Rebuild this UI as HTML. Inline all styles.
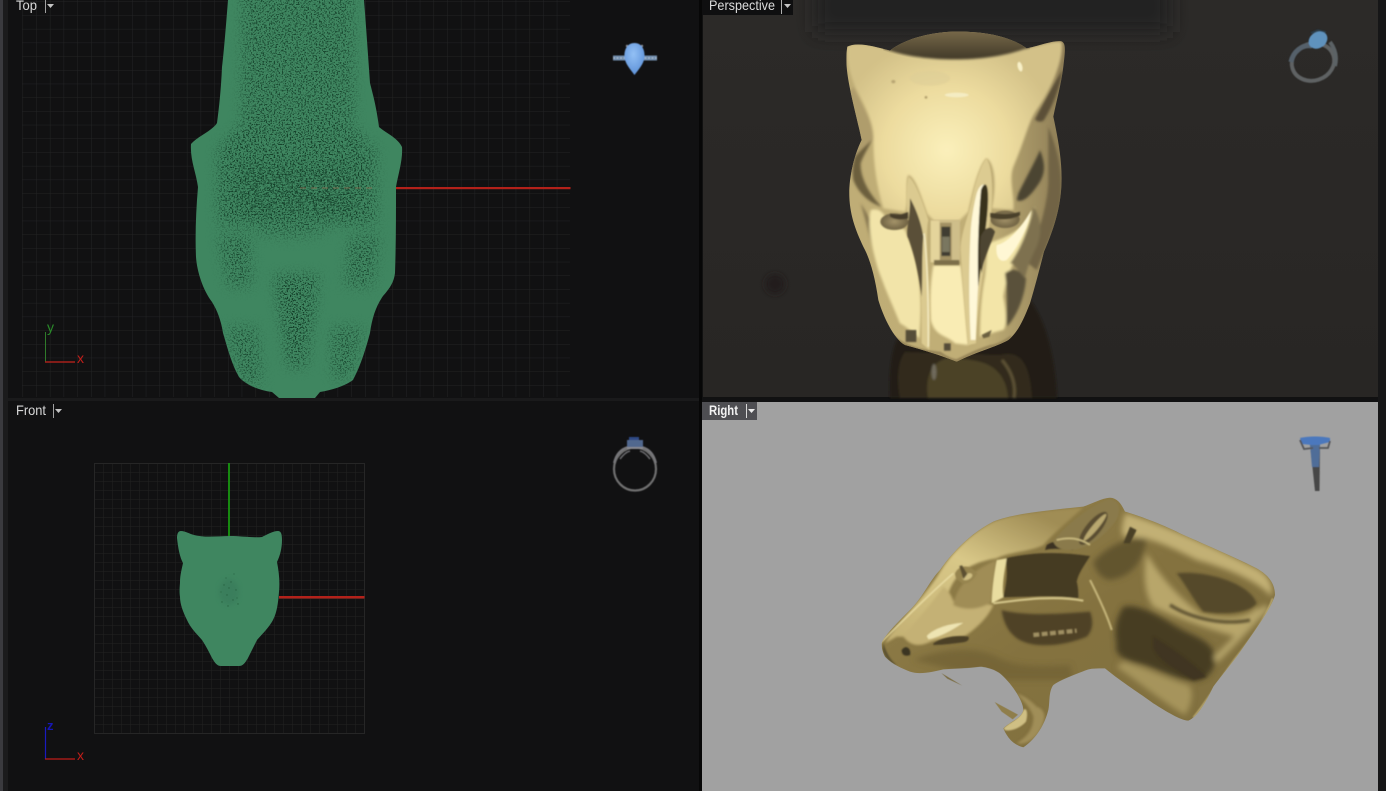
<!DOCTYPE html>
<html><head><meta charset="utf-8"><style>
html,body{margin:0;padding:0;background:#111112;overflow:hidden}
svg{display:block}
text{font-family:"Liberation Sans",sans-serif}
</style></head><body>
<svg width="1386" height="791" viewBox="0 0 1386 791" xmlns="http://www.w3.org/2000/svg">
<defs>
<pattern id="g1" x="22.5" y="1.5" width="13.7" height="13.7" patternUnits="userSpaceOnUse"><path d="M0 0H13.7M0 0V13.7" stroke="#232424" stroke-width="1" fill="none"/></pattern>
<pattern id="g2" x="94.5" y="463.5" width="9" height="9" patternUnits="userSpaceOnUse"><path d="M0 0H9M0 0V9" stroke="#222222" stroke-width="1" fill="none"/></pattern>
<filter id="speck" x="0" y="0" width="100%" height="100%" color-interpolation-filters="sRGB"><feTurbulence type="fractalNoise" baseFrequency=".62 .7" numOctaves="2" seed="4"/><feColorMatrix type="matrix" values="0 0 0 0 .07 0 0 0 0 .23 0 0 0 0 .15 9 0 0 0 -4.700"/></filter>
<filter id="streak" x="0" y="0" width="100%" height="100%" color-interpolation-filters="sRGB"><feTurbulence type="fractalNoise" baseFrequency=".22 .85" numOctaves="2" seed="9"/><feColorMatrix type="matrix" values="0 0 0 0 .07 0 0 0 0 .23 0 0 0 0 .15 9 0 0 0 -4.800"/></filter>
<clipPath id="topc"><path d="M228 0C226 25 224 50 222 67C221 90 219 108 217 123C212 131 198 136 191 144C190 160 196 172 198 187C196 210 195 235 196 257C197 272 203 290 212 302C217 310 221 320 223 333C228 350 232 365 239 377C246 385 258 390 272 392L279 398H315L320 392C332 390 345 386 353 380C361 365 366 348 370 333C372 318 376 306 383 296C390 288 394 282 395 273C396 245 396 215 396 187C398 175 403 160 402 147C398 138 386 133 379 127C376 105 373 95 370 83C368 55 366 25 364 0Z"/></clipPath>
<clipPath id="phc"><path d="M22 50C50 35 100 48 150 62C190 30 260 8 340 5C420 3 505 15 560 55C590 50 640 30 665 34C678 40 676 60 670 110C664 160 650 210 640 260C655 330 668 400 664 470C660 540 640 600 612 665C598 720 585 770 570 820C550 870 535 905 505 930C470 950 410 965 350 995C300 975 250 960 195 945C160 925 130 860 115 810C105 740 90 690 75 660C50 610 30 560 28 500C26 450 40 380 65 330C55 280 30 190 22 130C18 100 18 75 22 50Z"/></clipPath>
<clipPath id="rhc"><path d="M65 490C70 470 110 430 150 390C190 350 210 300 240 270C270 225 330 160 400 125C450 105 520 95 670 80C695 72 725 55 750 53C775 55 785 75 795 95C830 105 900 130 960 160C1050 200 1130 235 1190 265C1225 285 1245 310 1245 345C1235 380 1200 430 1130 530C1095 575 1075 600 1060 620C1040 660 1015 710 985 722C960 720 920 695 880 670C840 640 790 610 735 565C710 565 690 565 680 570C640 585 600 600 580 615C565 635 570 670 565 690C555 730 530 775 490 802C465 795 445 780 430 745C450 725 485 715 490 690C490 660 450 605 420 580C400 565 370 560 360 560C320 565 290 565 250 568C220 575 180 585 150 575C125 565 100 555 75 530C68 515 65 505 65 490Z"/></clipPath>
<filter id="b1" x="-20%" y="-20%" width="140%" height="140%"><feGaussianBlur stdDeviation="1"/></filter>
<filter id="b2" x="-20%" y="-20%" width="140%" height="140%"><feGaussianBlur stdDeviation="2.5"/></filter>
<filter id="b3" x="-30%" y="-30%" width="160%" height="160%"><feGaussianBlur stdDeviation="3"/></filter>
<filter id="b6" x="-30%" y="-30%" width="160%" height="160%"><feGaussianBlur stdDeviation="6"/></filter>
<filter id="bg" x="-30%" y="-100%" width="160%" height="300%"><feGaussianBlur stdDeviation="9"/></filter>
<filter id="l1" x="-10%" y="-10%" width="120%" height="120%"><feGaussianBlur stdDeviation="1"/></filter>
<filter id="l2" x="-10%" y="-10%" width="120%" height="120%"><feGaussianBlur stdDeviation="2"/></filter>
<filter id="l4" x="-10%" y="-10%" width="120%" height="120%"><feGaussianBlur stdDeviation="4"/></filter>
<filter id="l8" x="-20%" y="-20%" width="140%" height="140%"><feGaussianBlur stdDeviation="9"/></filter>
<filter id="s" x="-20%" y="-20%" width="140%" height="140%"><feGaussianBlur stdDeviation=".5"/></filter>
<mask id="mm" maskUnits="userSpaceOnUse" x="180" y="0" width="230" height="400">
<g filter="url(#b6)" fill="#fff">
<rect x="242" y="-20" width="112" height="140" opacity=".8"/>
<path d="M244 120H348L376 150V225H218V150Z" opacity=".9"/>
<path d="M218 235H250L252 287H228Z" opacity=".8"/>
<path d="M350 235H380L372 287H345Z" opacity=".8"/>
<ellipse cx="290" cy="230" rx="36" ry="8" opacity=".6"/>
<path d="M274 275H319L306 367H288Z" opacity="1"/>
<path d="M226 327H257L262 383H242Z" opacity=".8"/>
<path d="M332 327H363L350 377H332Z" opacity=".8"/>
</g></mask>
<mask id="mb" maskUnits="userSpaceOnUse" x="180" y="0" width="230" height="400">
<rect x="240" y="165" width="115" height="50" fill="#fff" opacity=".55" filter="url(#b6)"/></mask>
<radialGradient id="face" gradientUnits="userSpaceOnUse" cx="320" cy="360" r="340"><stop offset="0" stop-color="#fbf0bb"/><stop offset=".55" stop-color="#eddc9f"/><stop offset="1" stop-color="#d3c188"/></radialGradient>
<linearGradient id="sil" x1="0" x2="1" y1="0" y2="0"><stop offset="0" stop-color="#bfad76"/><stop offset=".6" stop-color="#c0ae76"/><stop offset="1" stop-color="#847450"/></linearGradient>
<linearGradient id="bump" x1="0" x2="0" y1="0" y2="1"><stop offset="0" stop-color="#7c6d4c"/><stop offset=".6" stop-color="#544a34"/><stop offset="1" stop-color="#3c3526"/></linearGradient>
<radialGradient id="eye"><stop offset="0" stop-color="#a5946a"/><stop offset="1" stop-color="#6f6243"/></radialGradient>
<linearGradient id="rb" x1="0" x2="1" y1="0" y2="1"><stop offset="0" stop-color="#988650"/><stop offset=".5" stop-color="#84723f"/><stop offset="1" stop-color="#807040"/></linearGradient>
<linearGradient id="skull" x1="0" x2=".7" y1="1" y2="0"><stop offset="0" stop-color="#c2af72"/><stop offset=".6" stop-color="#d9c888"/><stop offset="1" stop-color="#a08d55"/></linearGradient>
<radialGradient id="pear" cx=".45" cy=".35" r=".7"><stop offset="0" stop-color="#93c0f5"/><stop offset="1" stop-color="#5a8fd6"/></radialGradient>
<linearGradient id="pbg" x1="0" x2="0" y1="0" y2="1"><stop offset="0" stop-color="#2c2a28"/><stop offset="1" stop-color="#282624"/></linearGradient>
</defs>

<!-- window -->
<rect width="1386" height="791" fill="#111112"/>
<rect x="0" y="0" width="3" height="791" fill="#3a3a3e"/>
<rect x="3" y="0" width="5" height="791" fill="#1b1b1c"/>
<rect x="8" y="398" width="692" height="3" fill="#1a1a1b"/>
<rect x="699" y="0" width="3" height="791" fill="#070707"/>

<!-- TOP -->
<rect x="22" y="0" width="548" height="397" fill="url(#g1)"/>
<rect x="396" y="187" width="174.500" height="2.200" fill="#b3211a"/>
<path fill="#3f8660" d="M228 0C226 25 224 50 222 67C221 90 219 108 217 123C212 131 198 136 191 144C190 160 196 172 198 187C196 210 195 235 196 257C197 272 203 290 212 302C217 310 221 320 223 333C228 350 232 365 239 377C246 385 258 390 272 392L279 398H315L320 392C332 390 345 386 353 380C361 365 366 348 370 333C372 318 376 306 383 296C390 288 394 282 395 273C396 245 396 215 396 187C398 175 403 160 402 147C398 138 386 133 379 127C376 105 373 95 370 83C368 55 366 25 364 0Z"/>
<g clip-path="url(#topc)">
<g mask="url(#mm)"><rect x="180" y="0" width="230" height="400" filter="url(#speck)"/></g>
<g mask="url(#mb)"><rect x="180" y="0" width="230" height="400" filter="url(#streak)"/></g>
</g>
<path d="M300 188H372" stroke="#9a6a50" stroke-width="1" stroke-dasharray="6 5" opacity=".7"/>

<!-- top axis -->
<path d="M45.500 332V362" stroke="#2f7a2a" stroke-width="1"/>
<path d="M45 362H75" stroke="#a8201a" stroke-width="1.500"/>
<text x="47" y="332" font-size="14" fill="#2a8a2a">y</text>
<text x="77" y="363" font-size="14" fill="#c21e1a">x</text>

<!-- top ring -->
<g filter="url(#s)">
<rect x="613" y="55.500" width="44" height="5" fill="#6f8cab"/>
<path d="M613 58H657" stroke="#aebfd2" stroke-width="1.200" stroke-dasharray="2 1.500"/>
<circle cx="627" cy="46" r="1.200" fill="#8a8f96"/><circle cx="642" cy="46" r="1.200" fill="#8a8f96"/>
<path d="M634.500 43C642 43 645 50 644.500 57C644 64 638 70 634.500 75C631 70 625 64 624.500 57C624 50 627 43 634.500 43Z" fill="url(#pear)"/>
</g>

<!-- label Top -->
<text x="16" y="10" font-size="14" fill="#d8d8d8" textLength="21" lengthAdjust="spacingAndGlyphs">Top</text>
<rect x="45" y="0" width="1" height="13" fill="#a0a0a0"/>
<path d="M47 4H54L50.500 8Z" fill="#c4c4c4"/>

<!-- FRONT -->
<rect x="94" y="463" width="271" height="271" fill="url(#g2)"/>
<rect x="94.500" y="463.500" width="270" height="270" fill="none" stroke="#262626"/>
<rect x="228" y="463" width="2" height="75" fill="#178a10"/>
<rect x="279" y="596" width="85.500" height="2.500" fill="#b3211a"/>
<path fill="#3f8660" d="M177 538C177 534 178 531 181 531C185 531 190 534 194 535C205 538 218 536 230 536C242 536 254 538 262 537C266 535 273 531 278 531C281 531 282 534 282 540C282 548 280 556 277 562C279 572 280 582 279 592C278 604 277 612 273 620C268 629 262 634 257 640C254 646 251 652 248 658C245 663 243 666 239 666H221C217 666 215 663 212 658C209 652 206 646 202 640C197 634 191 629 187 620C183 612 180 604 180 597C179 590 180 585 180 582C180 575 182 568 183 563C180 558 178 548 177 538Z"/>
<ellipse cx="229" cy="592" rx="10" ry="13" fill="#37795a" opacity=".6" filter="url(#b2)"/>
<g fill="#25603f" opacity=".85"><circle cx="224" cy="585" r=".7"/><circle cx="231" cy="582" r=".7"/><circle cx="236" cy="590" r=".7"/><circle cx="227" cy="595" r=".7"/><circle cx="233" cy="600" r=".7"/><circle cx="222" cy="602" r=".7"/><circle cx="238" cy="604" r=".7"/><circle cx="228" cy="606" r=".7"/><circle cx="226" cy="578" r=".6"/><circle cx="234" cy="574" r=".6"/><circle cx="229" cy="588" r=".7"/><circle cx="221" cy="592" r=".6"/><circle cx="237" cy="598" r=".6"/></g>

<!-- front axis -->
<path d="M45.500 727V759" stroke="#1a1ac0" stroke-width="1.200"/>
<path d="M45 759H75" stroke="#c01e1a" stroke-width="1.200"/>
<text x="47" y="730" font-size="13" font-weight="bold" fill="#1616b8">z</text>
<text x="77" y="760" font-size="14" fill="#c21e1a">x</text>

<!-- front ring -->
<g filter="url(#s)">
<ellipse cx="635" cy="469" rx="21" ry="21.500" fill="none" stroke="#6f6f70" stroke-width="2.200"/>
<path d="M614 463C616 454 621 449 628 447M656 463C654 454 649 449 642 447" stroke="#77777a" stroke-width="2" fill="none"/>
<path d="M620 459C623 455 626 452 630 451M650 459C647 455 644 452 640 451" stroke="#6a6a6d" stroke-width="1.500" fill="none"/>
<rect x="627" y="440" width="16" height="7" fill="#51688e"/>
<rect x="629" y="437" width="10" height="3" fill="#2f4a85"/>
<rect x="627" y="447" width="16" height="2" fill="#8a8a90"/>
</g>
<text x="16" y="415" font-size="14" fill="#d8d8d8" textLength="30" lengthAdjust="spacingAndGlyphs">Front</text>
<rect x="53" y="404" width="1" height="14" fill="#a0a0a0"/>
<path d="M55 409H62L58.500 413Z" fill="#c4c4c4"/>

<!-- PERSPECTIVE -->
<rect x="702" y="0" width="676" height="398" fill="url(#pbg)"/>
<rect x="815" y="-20" width="355" height="52" fill="#232120" filter="url(#bg)"/>
<ellipse cx="775" cy="284" rx="10" ry="10" fill="#231f1c" filter="url(#b3)"/>
<rect x="702" y="397" width="676" height="1.500" fill="#111"/>
<rect x="1378" y="0" width="8" height="791" fill="#161617"/>
<rect x="702" y="0" width="1" height="398" fill="#111"/>

<!-- reflection below chin -->
<g filter="url(#b1)">
<path d="M890 398C889 380 890 355 897 340L1030 300C1045 320 1055 355 1057 398Z" fill="#241c16"/>
<path d="M900 398C896 380 898 360 905 352L1000 355C1020 350 1030 362 1032 398Z" fill="#312a1b"/>
<path d="M928 398C925 380 930 360 950 358C975 360 1005 360 1008 398Z" fill="#4c4228"/>
<ellipse cx="934" cy="372" rx="2.500" ry="8" fill="#6f6a5c"/>
<path d="M1002 360C1012 372 1016 385 1014 398" stroke="#5c5134" stroke-width="3" fill="none"/>
</g>

<!-- front head -->
<g transform="translate(840 30) scale(.33333)">
<g clip-path="url(#phc)">
<rect x="0" y="0" width="720" height="1020" fill="url(#sil)"/>
<path fill="url(#bump)" d="M130 -5H570V62C500 100 420 100 340 98C270 95 200 85 130 62Z"/>
<g filter="url(#l4)">
<path fill="url(#face)" d="M22 50C50 35 100 48 150 62C250 95 430 100 550 58C590 50 640 30 665 36C672 80 640 170 590 240C565 275 555 330 520 410C505 450 525 500 520 540L455 535C470 470 465 400 440 385C420 400 400 470 385 545L358 572L282 572L262 552C240 490 225 440 205 435C195 450 208 520 195 545L130 535C110 470 100 400 100 330C105 280 70 220 45 170C30 130 18 90 22 50Z"/>
<path d="M40 170C70 230 100 280 100 330C90 345 60 370 45 420L30 440L20 200Z" fill="#a8966a" opacity=".7"/>
<path d="M45 380C62 360 80 345 95 330C85 355 70 375 62 400C60 440 85 490 125 530C90 520 55 490 40 450C36 430 38 400 45 380Z" fill="#6c5f3e"/>
<path d="M62 520C90 560 130 650 155 710C165 760 150 800 130 760C115 720 90 620 62 520Z" fill="#7a6b49" opacity=".8"/>
<path d="M92 540C110 535 125 540 135 560C150 590 185 590 195 600C210 640 235 680 240 780C245 840 240 880 238 925C215 905 200 890 180 880C160 830 140 790 115 720C100 670 80 590 92 540Z" fill="#f2e4a9"/>
<path d="M280 706H362C372 780 378 870 385 945L345 940C320 915 285 920 272 870C268 810 272 750 280 706Z" fill="#f9ecb4"/>
<path d="M445 640C470 630 500 625 545 590C560 580 575 540 585 530C575 580 550 640 530 680C510 720 500 740 490 800C500 850 500 890 490 900C470 905 450 910 420 920C420 850 425 790 435 740C440 700 440 670 445 640Z" fill="#f3e5a8"/>
<path d="M585 268C605 230 635 170 668 120C660 170 640 225 612 270C605 278 590 275 585 268Z" fill="#5b5038"/>
<path d="M625 290C660 380 670 440 660 530C645 590 625 640 590 720L565 700C590 620 620 540 625 460Z" fill="#716445"/>
<path d="M495 730C520 710 540 720 558 745C555 800 530 860 500 890C498 850 505 800 495 730Z" fill="#5a513a"/>
<path d="M580 530C600 560 610 600 590 650C570 690 560 720 555 745C530 715 520 700 510 700C540 660 565 600 580 530Z" fill="#7e7150"/>
<path d="M535 490C560 440 590 385 600 360C615 400 620 430 590 470C570 500 545 520 530 510Z" fill="#4c4532"/>
</g>
<g filter="url(#l2)">
<path d="M205 440C225 450 250 520 265 570C255 610 265 720 270 800C272 860 270 920 268 960L245 940C245 860 245 780 235 720C220 670 205 600 200 520C198 490 200 460 205 440Z" fill="#dbca90"/>
<path d="M210 505C225 530 245 580 250 620C245 680 248 750 245 800C235 730 225 680 205 625C195 610 210 570 210 505Z" fill="#5a4f37"/>
<path d="M252 610C262 680 265 800 265 950" stroke="#f7efc8" stroke-width="4" fill="none"/>
<rect x="272" y="570" width="88" height="125" fill="#cfbe8a"/>
<rect x="272" y="572" width="26" height="125" fill="#e4d49b"/>
<rect x="282" y="690" width="76" height="15" fill="#7c6e48"/>
<rect x="300" y="578" width="35" height="112" fill="#a29163"/>
<rect x="304" y="590" width="27" height="88" fill="#3f3e30"/>
<rect x="306" y="620" width="23" height="46" fill="#7a7760"/>
<path d="M438 385C455 400 460 470 455 535C445 600 435 690 425 760C415 830 410 900 408 940L385 945C375 850 365 720 362 660C362 610 385 560 395 510C405 460 420 410 438 385Z" fill="#dccb91"/>
<path d="M410 490C422 455 440 455 442 490C444 540 430 620 420 700C412 780 410 860 407 930L392 930C386 820 386 700 392 600C396 550 404 515 410 490Z" fill="#fff8d8"/>
<path d="M423 480C432 455 443 458 444 490C446 540 436 600 430 650C425 700 420 730 415 770C412 680 415 570 423 480Z" fill="#37311f"/>
<path d="M422 620C435 590 452 585 465 605C450 650 432 680 425 730C420 700 418 660 422 620Z" fill="#4e4430"/>
<path d="M470 645C500 640 540 600 575 540C565 590 530 660 500 690C480 700 465 680 470 645Z" fill="#fff7d4"/>
<ellipse cx="163" cy="575" rx="42" ry="25" fill="url(#eye)"/>
<path d="M150 550C170 555 185 555 205 545L205 565C190 570 165 570 150 560Z" fill="#473e2a"/>
<ellipse cx="495" cy="568" rx="44" ry="26" fill="url(#eye)"/>
<path d="M450 548C480 552 510 555 540 545L540 556C510 572 475 570 450 562Z" fill="#4a412c"/>
<rect x="197" y="900" width="32" height="36" fill="#574e39"/>
<rect x="312" y="940" width="20" height="22" fill="#544b37"/>
<path d="M425 915L455 900L448 920L430 925Z" fill="#6a5e40"/>
<path d="M160 920C190 950 250 965 300 970C320 985 340 992 350 992C370 985 400 965 450 950C480 945 500 930 515 920" stroke="#99875a" stroke-width="10" fill="none"/>
</g>
</g>
<g filter="url(#l2)">
<ellipse cx="160" cy="155" rx="6" ry="5" fill="#b8a673"/>
<ellipse cx="258" cy="202" rx="4" ry="4" fill="#b09e6b"/>
<ellipse cx="540" cy="110" rx="7" ry="15" fill="#f8f0c8" transform="rotate(-15 540 110)"/>
<ellipse cx="350" cy="195" rx="36" ry="7" fill="#f4ecc3"/>
<ellipse cx="270" cy="145" rx="60" ry="22" fill="#dccd97" opacity=".55"/>
</g>
</g>

<!-- persp ring -->
<g filter="url(#s)">
<ellipse cx="1313" cy="62" rx="21.500" ry="18.500" transform="rotate(-18 1313 62)" fill="none" stroke="#5f6263" stroke-width="4"/>
<path d="M1291 62C1293 52 1302 44 1312 46" stroke="#55606a" stroke-width="5" fill="none"/>
<path d="M1330 42C1336 50 1337 58 1335 66" stroke="#5b6265" stroke-width="4" fill="none"/>
<ellipse cx="1318" cy="40" rx="10" ry="8" transform="rotate(-35 1318 40)" fill="#5f92bd"/>
<path d="M1311 33L1318 30L1326 32" stroke="#2a3c4a" stroke-width="1.500" fill="none"/>
</g>

<!-- label perspective -->
<rect x="702" y="0" width="91" height="15" fill="#0f0f10"/>
<text x="709" y="10" font-size="14" fill="#dcdcdc" textLength="66" lengthAdjust="spacingAndGlyphs">Perspective</text>
<rect x="781" y="0" width="1" height="14" fill="#b0b0b0"/>
<path d="M784 4H791L787.500 8Z" fill="#c4c4c4"/>

<!-- RIGHT -->
<rect x="702" y="402" width="676" height="389" fill="#a1a1a1"/>
<g transform="translate(860 480) scale(.33333)">
<g clip-path="url(#rhc)">
<rect x="0" y="0" width="1290" height="840" fill="url(#rb)"/>
<g filter="url(#l8)">
<path d="M795 100C900 130 1050 195 1190 265C1225 285 1240 310 1235 350C1200 310 1120 270 1010 240C930 200 860 165 790 170C780 150 790 125 795 100Z" fill="#c2b074"/>
<path d="M860 220C890 270 930 330 1020 400C1100 420 1170 415 1190 380C1215 400 1180 440 1130 470C1050 450 940 410 880 380C850 340 850 270 860 220Z" fill="#b8a66b"/>
<path d="M790 380C840 370 900 410 950 440C1000 470 1065 480 1065 540C1060 590 1020 610 980 600C930 590 880 560 830 550C790 540 760 520 770 490C760 450 770 410 790 380Z" fill="#463c22"/>
<path d="M700 245C740 200 800 170 860 175C850 240 820 290 750 300C720 295 705 270 700 245Z" fill="#62542f"/>
<path d="M790 545C850 560 920 595 985 615C1000 625 1000 670 975 705C930 680 840 610 770 560Z" fill="#a6945c"/>
<path d="M1065 540C1120 490 1180 420 1220 380" stroke="#b5a46b" stroke-width="20" fill="none"/>
<path d="M160 540C260 500 350 500 410 530C460 560 530 560 630 555L640 600L400 600Z" fill="#6f5f35" opacity=".7"/>
</g>
<g filter="url(#l4)">
<path fill="url(#skull)" d="M240 275C270 225 330 160 400 125C450 105 520 95 670 82C640 110 590 150 550 195C510 215 450 215 410 235C350 245 290 265 265 340C240 370 200 400 140 470L110 470L75 490C100 440 200 345 240 275Z"/>
<path d="M130 470C170 420 210 380 250 320C280 340 280 380 290 370C330 375 380 370 400 375C380 420 340 450 320 465C290 480 240 470 200 490C170 500 150 495 130 470Z" fill="#c4b174"/>
<path d="M280 375C285 330 330 270 410 240C400 290 395 340 395 365C370 385 320 395 280 375Z" fill="#a08d56"/>
<path d="M950 280C1040 270 1170 310 1190 370C1170 400 1090 405 1030 395C1000 360 975 310 950 280Z" fill="#544829"/>
<path d="M930 375C1000 420 1100 435 1170 420" stroke="#5f5233" stroke-width="10" fill="none"/>
<path d="M880 470C930 500 1000 550 1040 590L1000 600C950 570 890 540 880 500Z" fill="#3f3620"/>
<path d="M425 390C500 410 620 400 690 395C700 420 700 450 680 470C620 495 540 505 490 485C450 470 430 430 425 390Z" fill="#4f4327"/>
<path d="M470 640C500 650 520 670 530 680C560 690 560 720 535 760C515 785 490 795 470 790C500 770 520 750 520 710C510 680 495 670 470 640Z" fill="#a08e58"/>
</g>
<g filter="url(#l2)">
<path d="M520 465L650 452" stroke="#a09063" stroke-width="13" stroke-dasharray="18 7"/>
<path d="M285 280C300 250 330 255 352 280C340 305 315 320 300 305C290 300 285 290 285 280Z" fill="#978550"/>
<ellipse cx="322" cy="290" rx="16" ry="9" fill="#cfbe82" transform="rotate(-25 322 290)"/>
<path d="M298 258L310 298L322 282L306 256Z" fill="#5c5030"/>
<path d="M435 235C520 215 600 215 690 228C670 260 655 280 650 305C655 325 655 340 655 355C590 345 500 350 430 352C440 310 445 270 435 235Z" fill="#453a22"/>
<path d="M410 240C400 290 395 340 395 370L430 352C425 310 435 270 440 235Z" fill="#e9dda0"/>
<path d="M400 370C480 360 580 345 670 362" stroke="#d9cb90" stroke-width="6" fill="none"/>
<path d="M560 195C590 175 620 185 640 210C600 205 570 205 555 210Z" fill="#3b3320"/>
<path d="M690 300C710 340 740 400 755 450" stroke="#c9b97e" stroke-width="6" fill="none"/>
<path d="M60 490C120 430 210 340 280 280" stroke="#ede1a8" stroke-width="4" fill="none"/>
<path d="M70 490C80 520 95 545 110 555C95 555 75 535 68 510Z" fill="#5d5230"/>
<path d="M125 510C140 490 155 510 150 525C135 530 125 525 125 510Z" fill="#3b3420"/>
<path d="M220 490C250 470 290 465 325 470C330 480 320 487 300 488C270 492 240 495 220 495Z" fill="#4b4126"/>
<path d="M200 468C220 445 270 430 310 428C280 450 230 475 205 478Z" fill="#eee4b2"/>
<path d="M580 185C620 130 690 80 745 58C775 58 785 85 770 118C740 165 680 210 630 210C600 210 585 200 580 185Z" fill="#8a7a4c"/>
<ellipse cx="700" cy="145" rx="62" ry="22" transform="rotate(-50 700 145)" fill="#5a4e30"/>
<ellipse cx="705" cy="142" rx="52" ry="9" transform="rotate(-50 705 142)" fill="#b9a86f"/>
<path d="M590 180C630 170 660 175 690 195" stroke="#cfbf83" stroke-width="5" fill="none"/>
<path d="M830 150L810 190L790 190L810 140Z" fill="#4a4027"/>
<path d="M1000 712C1030 680 1070 610 1130 530C1170 480 1215 420 1238 355" stroke="#cfbe82" stroke-width="4" fill="none"/>
<path d="M430 745C450 725 475 720 490 690C500 680 505 700 498 725C480 745 450 755 435 750Z" fill="#cfbf84"/>
</g>
</g>
<g filter="url(#l1)">
<path d="M244 579L307 617L262 596Z" fill="#7a6c42"/>
<path d="M404 666L474 704L458 718L425 695Z" fill="#8f7e4c"/>
</g>
</g>

<!-- right ring -->
<g filter="url(#s)">
<path d="M1310 444L1320 444L1319.500 491H1315Z" fill="#464646"/>
<path d="M1310 444L1320 444L1319 467H1312Z" fill="#4f6d98"/>
<path d="M1300 438C1308 436 1322 436 1330 438L1330 442L1318 445H1312L1302 444Z" fill="#4c78bd"/>
<path d="M1300 440L1304 449L1313 448M1330 441L1328 448L1319 448" stroke="#55565a" stroke-width="1.800" fill="none"/>
</g>

<!-- label right -->
<rect x="702" y="402" width="55" height="18" fill="#4e4e52"/>
<text x="709" y="415" font-size="13.500" font-weight="bold" fill="#f2f2f2" textLength="29" lengthAdjust="spacingAndGlyphs">Right</text>
<rect x="746" y="404" width="1" height="14" fill="#d8d8d8"/>
<path d="M748 409H755L751.500 413Z" fill="#ececec"/>
</svg>
</body></html>
